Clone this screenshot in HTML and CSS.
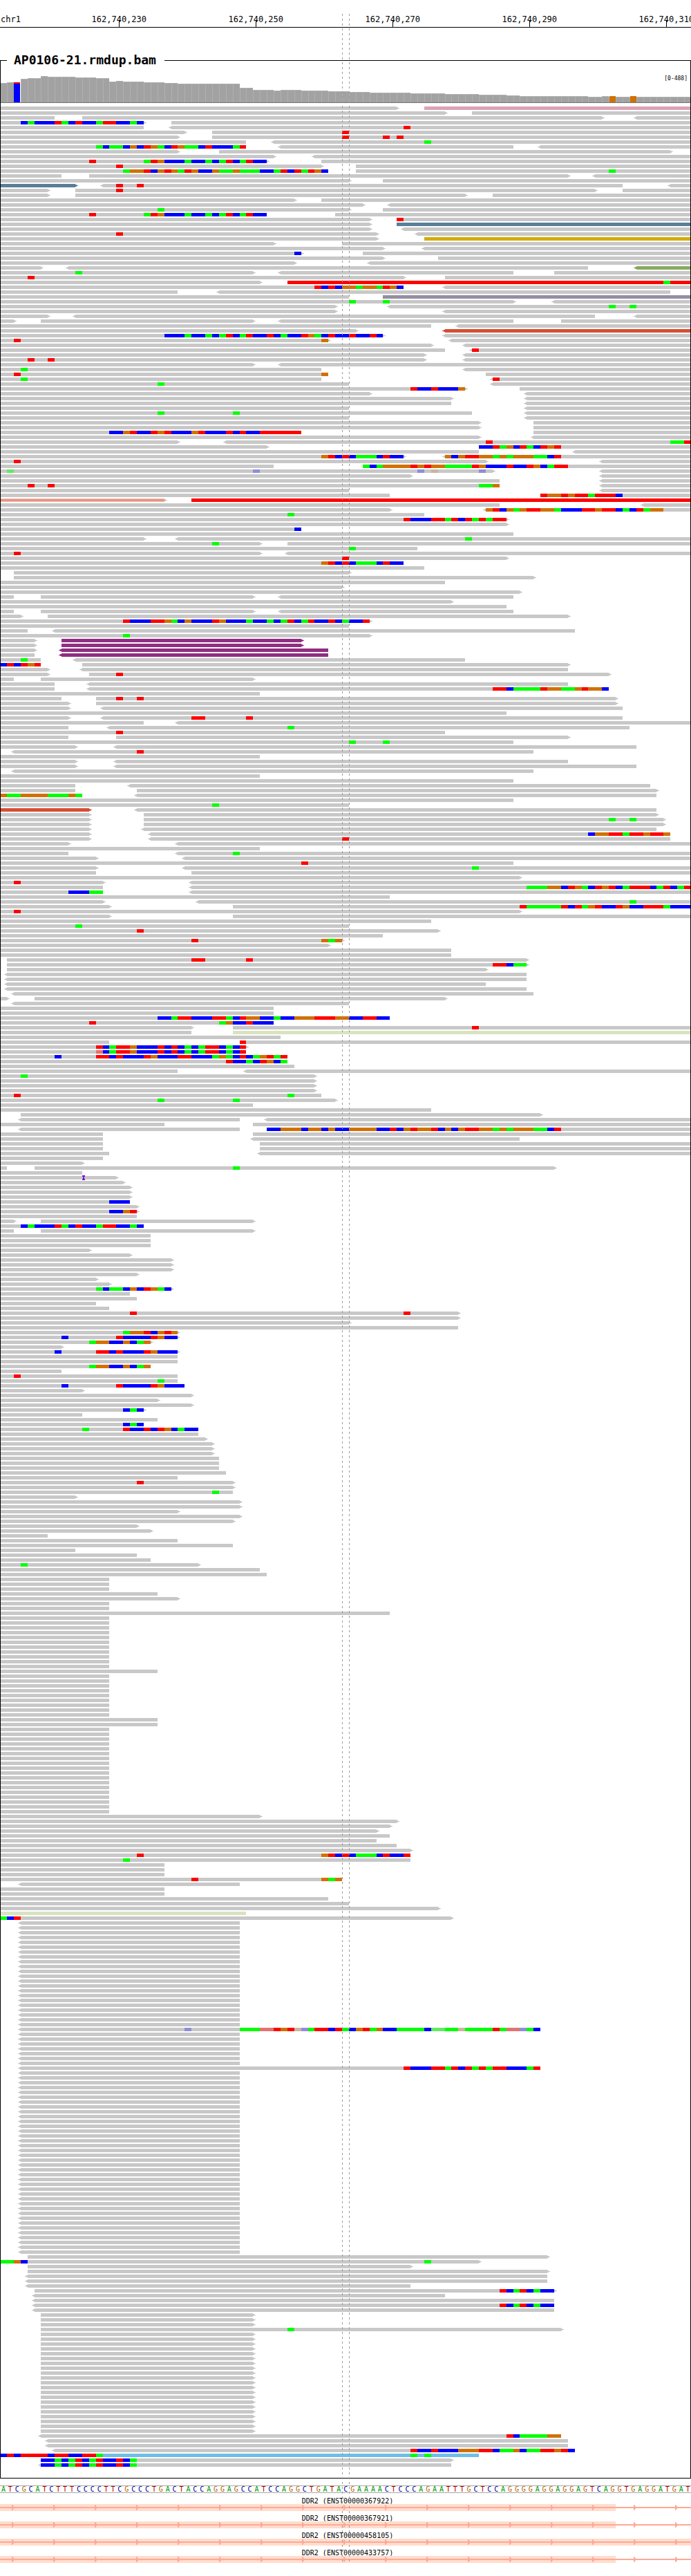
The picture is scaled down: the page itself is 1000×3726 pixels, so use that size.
FILE: index.html
```html
<!DOCTYPE html>
<html lang="en">
<head>
<meta charset="utf-8">
<meta name="viewport" content="width=device-width, initial-scale=1">
<title>AP0106-21.rmdup.bam</title>
<link rel="stylesheet" href="styles.css">
</head>
<body>
<main class="browser">
  <svg class="ruler" id="ruler" role="img" aria-label="Position on chr1"></svg>

  <fieldset class="track">
    <legend class="track-name">AP0106-21.rmdup.bam</legend>
    <div class="track-body">
      <span class="range">[0-488]</span>
      <svg class="coverage" id="coverage" role="img" aria-label="Coverage"></svg>
      <svg class="reads" id="reads" role="img" aria-label="Aligned reads">
        <defs>
          <path id="fwd" d="M0 1h2v3h-2zM2 2h2v1h-2z"/>
          <path id="rev" d="M-2 1h2v3h-2zM-4 2h2v1h-2z"/>
        </defs>
      </svg>
    </div>
  </fieldset>

  <div class="sequence" id="sequence">ATCGCATCTTTCCCCTTCGCCCTGACTACCAGGAGCCATCCAGGCTGATACGAAAACTCCCAGAATTTGCTCCAGGGGAGGAGGAGTCAGGTGAGGATGAT</div>

  <section class="genes">
    <div class="gene">
      <span class="gene-name">DDR2 (ENST00000367922)</span>
      <svg class="gene-model">
        <defs>
          <pattern id="strand" width="60" height="10" patternUnits="userSpaceOnUse">
            <path class="intron" d="M0 4h60v2H0z"/>
            <path class="intron" d="M17 1h1l3 4l-3 4h-1z"/>
          </pattern>
        </defs>
        <rect class="exon" width="89.11%" height="10"/>
        <rect width="100%" height="10" fill="url(#strand)"/>
      </svg>
    </div>
    <div class="gene">
      <span class="gene-name">DDR2 (ENST00000367921)</span>
      <svg class="gene-model">
        <rect class="exon" width="89.11%" height="10"/>
        <rect width="100%" height="10" fill="url(#strand)"/>
      </svg>
    </div>
    <div class="gene">
      <span class="gene-name">DDR2 (ENST00000458105)</span>
      <svg class="gene-model">
        <rect class="exon" width="100%" height="10"/>
        <rect width="100%" height="10" fill="url(#strand)"/>
      </svg>
    </div>
    <div class="gene">
      <span class="gene-name">DDR2 (ENST00000433757)</span>
      <svg class="gene-model">
        <rect class="exon" width="89.11%" height="10"/>
        <rect width="100%" height="10" fill="url(#strand)"/>
      </svg>
    </div>
  </section>

  <div class="focus" aria-hidden="true"></div>
</main>
<script src="pileup.js"></script>
</body>
</html>
```
FILE: styles.css
```css
body {
  margin: 0;
  background: #fff;
  color: #000;
  font-family: "DejaVu Sans Mono", monospace;
}

.browser {
  position: relative;
  overflow: hidden;
  padding-bottom: 19px;
}

svg {
  display: block;
  width: 100%;
}

/* ruler */
.ruler {
  height: 76px;
  font-size: 12px;
}

.ruler line {
  stroke: #000;
  shape-rendering: crispEdges;
}

/* alignment track */
.track {
  min-width: 0;
  margin: 0;
  padding: 0 0 14px;
  border: 1px solid #000;
}

.track-name {
  margin-left: 9px;
  padding: 0 12px 0 10px;
  font-size: 18px;
  font-weight: bold;
  line-height: 22px;
}

.track-body {
  position: relative;
  z-index: -1;
  margin: 0 -1px;
}

.range {
  position: absolute;
  top: 10px;
  right: 5px;
  font-size: 8px;
  line-height: 12px;
}

.coverage {
  height: 51px;
  margin-bottom: 5px;
  shape-rendering: crispEdges;
}

.bar-edge { fill: #b0b0b0; }
.bar { fill: #a2a2a2; }
.bar-base { fill: #757575; }

.reads {
  shape-rendering: crispEdges;
}

.read { fill: #c8c8c8; }
.read-p { fill: #dba3b5; }
.read-u { fill: #587e98; }
.read-y { fill: #d4ac08; }
.read-g { fill: #88aa61; }
.read-r { fill: #f00; }
.read-m { fill: #948ea4; }
.read-b { fill: #d64f34; }
.read-v { fill: #912d82; }
.read-l { fill: #d9e3c0; }
.read-k { fill: #6ebee6; }
.read-s { fill: #ff8c75; }

.base-A { fill: #0f0; }
.base-C { fill: #00f; }
.base-G { fill: #d17105; }
.base-T { fill: #f00; }
.base-a { fill: #64e864; }
.base-c { fill: #8e8eda; }
.base-g { fill: #ccb4a0; }
.base-t { fill: #e37272; }
.insertion { fill: #7814dc; }

/* reference sequence */
.sequence {
  display: flex;
  margin-top: 10px;
  border: solid #a8a8a8;
  border-width: 1px 0;
  font-size: 10px;
  line-height: 9px;
}

.nt {
  flex: 1 1 0;
  min-width: 0;
  text-align: center;
}

.nt-A { color: #009600; }
.nt-C { color: #000096; }
.nt-G { color: #b4640a; }
.nt-T { color: #b40000; }

/* genes */
.genes {
  margin-top: 1px;
}

.gene-name {
  display: block;
  padding: 6px 0 0 6px;
  font-size: 10px;
  line-height: 9px;
  text-align: center;
}

.gene-model { height: 10px; }
.exon { fill: #ffddcd; }
.intron { fill: #ffa896; }

/* dashed guides either side of the centre base */
.focus {
  position: absolute;
  top: 20px;
  bottom: 21px;
  left: 49.505%;
  width: 11px;
  background:
    repeating-linear-gradient(#999 0 3px, transparent 3px 7px) left / 1px 100% no-repeat,
    repeating-linear-gradient(#999 0 3px, transparent 3px 7px) right / 1px 100% no-repeat;
}
```
FILE: pileup.js
```js
const BASES = 101;
const ROW = 7;
const pct = n => (n * 100 / BASES).toFixed(4) + '%';

// One line per row. "<a-b>" is a read over bases a to b with its strand arrow and an
// optional colour key, "n:ACGT" lists mismatches from base n (lower case: low quality),
// "in" is an insertion and a leading "xN" repeats the row.
const ROWS = `
0-58> 62-101p
0-65> 69-101
0-8 12-88> <93-101
0-21> 3:CACCCTACTCCATTCCAC 25-101
0-21 <25-101 59:T
0-27> 31-101 50:T
0-26> 31-101 50:T 56:T 58:T
0-36 <40-101 62:A
0-36 14:ACAACGCTGACTGAACTCCCAT <41-75 <79-101
0-26> 32-98>
0-40> <46-101
0-39> 13:T 21:ATGCCCACCACATCATCC 47-101
0-47> 17:T 52-101
0-48 18:AGGTCGTGATGCCGAAGAAACCATCTATGC 52-101 89:A
0-9 13-83> <87-101
0-51> 56-101
0-11>u <15-91 17:T 20:T <98-101
0-7> 11-87> 17:T 91-101
0-7> 11-68> 72-101
0-43> 47-101
0-53> <57-101
0-51> 23:A 56-101
0-39 13:T 21:ATGCCCACCACATCATCC 49-101
0-54> 58-101 58:T
0-54> 58-101u
0-54> <59-101
0-55> 17:T <61-101
0-55> 62-101y
0-40> 50-101
0-56> <62-101
0-44> 43:C 53-101
0-56> 64-101
0-43> <54-101
0-6> <10-86 <93-101g
0-37> 11:A <41-75 81-101
0-59> 4:T 65-101
0-38> 42-101r 97:A
0-59 46:TCTCGGAGGATGC <65-101
0-26 <32-98
0-51 56-101m
0-75> 51:A 56:A <81-101
0-49> <57-101 89:A 92:A
0-49> <65-101
0-7> <11-87 <93-101
0-2> 6-37> <41-75 82-101
0-63 <67-101
0-52> <65-101b
0-56> 24:CCCACCACATCATCCTCACCTGACTCCTCCTC <65-101
0-48> 2:T 47:G <66-101
0-63> <68-101
0-65 <69-101 69:T
0-62> <68-101
0-62> 4:T 7:T <68-101
0-37> <41-101
0-47 3:A <68-101
0-48 2:T 47:G 71-101
0-47 3:A <72-101 72:T
0-51 23:A <72-101
0-68> 60:TCCTCCCG 76-101
0-54> <77-101
0-66> <77-101
0-66 <77-101
0-51 <77-101
0-69 23:A 34:A <77-101
0-51 <77-101
x2 0-70> 78-101
0-44 16:CCGTCCTGTCCCGTCCCTCTCCTTTTTT 78-101
0-70> <78-101
0-26> <33-101 71:T 98:AAT
0-39> 70-101 70:CCTAGCTACTGT
0-70 <84-101
0-59> 47:GTCTCAAACTCC <65-101 65:GCGTTGGAGAGGGAACT
0-71> 2:T <88-101
0-40 53-101 53:ACAGGGGTGTGGAAAATGCCCTCCTGCATT
0-72> 1:a 37:c 61:c 63:g 70:c <88-101
0-60> <88-101
0-73 <88-101
0-73 4:T 7:T 70:AAG <88-101
0-51 <88-101
0-57 79-101 79:TGGTGTTATTTC
0-24>s 28-101r
0-73 <94-101
0-57> <71-101 71:GTCGAGTTGGACCCTTGTTCACTAGG
0-62 42:A
0-74> 59:TCCCTTATCTATATT
0-74>
0-44 43:C
0-75
0-21> <26-101 68:A
0-38> 31:A 42-101
0-61 51:A
0-38> 2:T <42-101
0-74> 50:T
0-59 47:GTCTCAAACTCC
0-62
2-51>
2-78>
0-65
0-50>
0-76>
0-2 6-37> <41-75
0-66>
0-74
0-2 6-37> <41-75
0-3> 7-83>
0-54> 18:TCCCTTGACGCCCTGCCCACCACATCATCCTCACCT
0-51
0-4 <8-84
0-54> 18:A
x2 0-5> 9-44>v
0-5> <9-48v
0-5 <9-48v
0-6 3:A <11-68
0-6 0:CTCTGT 12-83>
0-7> <12-83
0-7> 13-89> 17:T
0-2 6-37>
0-8 <13-83
0-8 <13-89 72:TTCAAAATGGAAGTGGC
0-38
0-9 14-90> 17:T 20:T
0-10> 14-90>
0-10> <15-91
0-74
0-10> <15-91 28:TT 36:T
0-21 <26-101
0-10 <16-92 42:A
0-65 17:T
0-10 17-83>
0-75 51:A 56:A
0-11> <17-93
<2-78 20:T
0-38
0-11> <17-83
0-11> <17-93
<2-78
0-38
0-75
0-11 <19-95
0-11 20-96>
0-12 0:GAAGGGGAAAGA <20-96
0-75
0-51 31:A
0-13>b <20-96
0-13> 21-96>
0-13> 21-97> 89:A 92:A
0-13> 21-97>
0-13> <21-96
0-13> <22-98 86:CGGTTATTGTTG
0-13> <22-98 50:T
0-10> <26-101
0-38
0-10 <26-101 34:A
0-14> <27-101
0-75 44:T
0-14> <27-101 69:A
0-14 28-101
0-76>
0-15> 2:T <28-101
0-15 <28-101 77:AAAGGCTGACTGTCATTTCATCAT
0-15 10:CCCAA <28-101
0-57
0-15> <29-101 92:A
0-16> 34-101 76:TAAAAATCTAGTCCTGCCTTTACCC
0-76> 2:T
0-16> 34-101
0-63
0-51 11:A
0-64> 20:T
0-56
0-50> 28:T 47:GAG
0-48>
x2 0-66
1-77> 28:TT 36:T
1-77> 72:TTCAA
1-71>
x2 <1-77
<1-71
<1-77
<2-78
0-1> 5-65>
<2-51
x2 0-40
0-57 23:CCATTCCCTTACTGGCCACCGGGTTTGGCCTTCC
0-40 13:T 32:AGCCTCCC
0-28> 34-101 69:T
0-28 34-101l
0-41
0-16 35-101 35:T
0-36> 14:TCATTGCCCTCTCACATTCACT
0-36 14:tCATTGCCCTCTCACATTCACT
0-42 8:C 14:TTCTCCCTGCCCTTCCCAGACTCAGTAT
0-42 33:TCCACTGCA
0-43
0-26 <36-101
0-46> 3:A
x3 0-46>
0-47 2:T 42:A
0-49> 23:A 34:A
0-37
0-63
3-79>
<3-35 <39-101
0-24 37-101
<3-35 39-101 39:CCGGGCGGCGCCGGGGCCTCGTGGTCGCGTTGGAGAGGGAACT
0-15 37-101
0-15 <37-76
x2 0-15 38-101
0-16 <38-101
0-15
0-12>
0-1 5-81> 34:A
0-12
0-17> i12
0-18>
x3 0-19>
0-19 16:CCC
0-20>
0-20> 16:CCGT
0-20
0-2> 6-37>
0-21 3:CACCCTACTCCATTCCAC
0-2 6-37>
x3 0-22
0-13>
0-19>
x3 0-25>
0-20>
0-14>
0-16>
0-25> 14:ACAACGCTGAC
0-19
0-20
0-14
0-16
0-67> 19:T 59:T
0-67>
0-51>
0-67
0-26> 18:AGGTCGTG
0-26> 9:C 17:TCCCCTGCC
0-22> 13:AGGCCGCAG
0-9>
0-26> 8:C 14:TTCTCCCTGCCC
x2 0-26
0-22 13:AGGCCGCAG
0-9
0-26 2:T
0-26 23:A
0-27 9:C 17:TCCCCTGCCC
0-12>
0-28>
0-23>
0-28>
0-21> 18:CAC
0-12
0-23
0-21 18:CAC
0-29 12:A 18:TCCTCTGCACC
0-29
0-30>
x3 0-31>
x3 0-32
0-33
0-26
0-34> 20:T
0-34>
0-34 31:A
0-11>
x2 0-35>
0-26>
0-35>
0-34>
0-20>
0-22>
0-7
0-26
0-34
0-11
0-20
0-22
0-29> 3:A
0-38
0-39
x3 0-16
0-23
0-26>
x2 0-16
0-57
x11 0-16
0-23
x9 0-16
x2 0-23
x18 0-16
0-38>
0-58>
0-57>
0-55>
0-57
0-55
0-58
0-60>
0-60 20:T 47:GTCTCAAACTCCT
0-60 18:A
x3 0-24
0-50 28:T 47:GAG
<3-35
x2 0-24
0-48
0-51
0-64>
0-36l
0-66> 0:ACT
x22 <3-35
<3-79 27:c 35:AAAttTGTgcATTCTACGTAGCCAAAACaaAAgAAAATAttcAC
x7 <3-35
<3-79 59:TCCCTTATCTATATTCCCAT
x38 <3-35
4-80>
0-70> 0:AAGC 62:A
4-60>
4-80>
x2 <4-80
<4-60
5-81> 73:TCATCACC
<5-65
<5-81
<5-81 73:TCATCACC
<5-81
x3 6-37>
6-82> 42:A
x21 6-37>
<6-82 74:TCAAAAGG
x2 <7-83
<8-84 60:TCCTCCCGGGTTCAAGCAATTGTC
0-70k 0:CTCTTTTCTTCCTTA 60:A 62:A
6-66> 6:CCACATCATCCTCA
<6-66 6:CCACATCATCCTCA
`;

// Bar heights, written as [number of bases, height].
const DEPTH = [[1, 28], [2, 29], [1, 34], [2, 35], [1, 38], [4, 37], [3, 36], [2, 35], [1, 30], [1, 31],
  [3, 30], [3, 29], [2, 28], [9, 27], [2, 21], [3, 18], [1, 17], [3, 18], [4, 17], [3, 16], [3, 15],
  [6, 14], [5, 13], [5, 12], [4, 11], [2, 10], [10, 9], [2, 8], [2, 9], [2, 8], [1, 9], [8, 8]];

function rect(cls, from, to, y, h) {
  return `<rect class="${cls}" x="${pct(from)}" width="${pct(to - from)}" y="${y}" height="${h}"/>`;
}

function drawRow(line, y) {
  let reads = '', marks = '';
  for (const token of line.split(' ')) {
    const read = token.match(/^(<?)(\d+)-(\d+)(>?)([a-z]?)$/);
    if (read) {
      const [, rev, a, b, fwd, key] = read;
      const cls = key && key !== 's' ? 'read-' + key : 'read';
      reads += rect(cls, +a, +b, y, 5);
      if (key === 's') reads += rect('read-s', +a, +b, y + 1, 3);
      if (rev) reads += `<use class="${cls}" href="#rev" x="${pct(+a)}" y="${y}"/>`;
      if (fwd) reads += `<use class="${cls}" href="#fwd" x="${pct(+b)}" y="${y}"/>`;
    } else if (token[0] === 'i') {
      marks += `<svg class="insertion" x="${pct(+token.slice(1))}" y="${y - 1}" width="4" height="7">` +
        '<path d="M0 0h4v2h-1v3h1v2h-4v-2h1v-3h-1z"/></svg>';
    } else {
      const [start, letters] = token.split(':');
      let pos = +start;
      for (const run of letters.match(/(.)\1*/g)) {
        marks += rect('base-' + run[0], pos, pos + run.length, y, 5);
        pos += run.length;
      }
    }
  }
  return reads + marks;
}

const rows = ROWS.trim().split('\n').flatMap(line => {
  const rep = line.match(/^x(\d+) (.*)$/);
  return rep ? Array(+rep[1]).fill(rep[2]) : [line];
});
const reads = document.getElementById('reads');
reads.style.height = rows.length * ROW + 'px';
reads.innerHTML += rows.map((line, i) => drawRow(line, i * ROW)).join('');

const FLOOR = 50;
let cover = '';
DEPTH.flatMap(([n, h]) => Array(n).fill(h)).forEach((h, i) => {
  const top = FLOOR - h;
  const inner = (cls, dx, y, height) =>
    `<rect class="${cls}" x="${pct(i)}" y="${y}" height="${height}" transform="translate(${dx} 0)" style="width:calc(${pct(1)} - 1px)"/>`;
  if (i === 2) {
    cover += inner('base-T', 0, top, 2) + inner('base-C', 0, top + 2, h - 2);
  } else if (i === 89 || i === 92) {
    cover += rect('bar-edge', i, i + 1, top + 1, h - 1) + inner('base-G', 1, top, h);
  } else {
    cover += rect('bar-edge', i, i + 1, top, h) + inner('bar', 1, top + 1, h - 1);
  }
});
document.getElementById('coverage').innerHTML = cover + rect('bar-base', 0, BASES, FLOOR, 1);

let ruler = '<text x="1" y="32">chr1</text><line x1="0" x2="100%" y1="39.5" y2="39.5"/>';
for (let i = 17; i < BASES; i += 20) {
  const x = pct(i + 0.4);
  ruler += `<text x="${x}" y="32" text-anchor="middle">162,740,${213 + i}</text>` +
    `<line x1="${x}" x2="${x}" y1="29" y2="39"/>`;
}
document.getElementById('ruler').innerHTML = ruler;

const sequence = document.getElementById('sequence');
sequence.innerHTML = [...sequence.textContent].map(c => `<span class="nt nt-${c}">${c}</span>`).join('');
```
